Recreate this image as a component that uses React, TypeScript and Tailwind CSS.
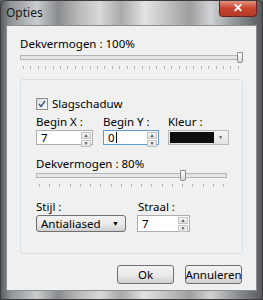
import React from 'react'

const font = { fontFamily: '"Noto Sans", "Open Sans", sans-serif' }

function Ticks({ count }: { count: number }) {
	return (
		<div className="flex justify-between px-[3px]">
			{Array.from({ length: count }).map((_, i) => (
				<div key={i} className="h-[3px] w-px bg-[#b4b4b4]" />
			))}
		</div>
	)
}

function Slider({ pos, ticks }: { pos: string; ticks: number }) {
	return (
		<div className="flex flex-col gap-[3px]">
			<div className="relative h-[11px]">
				<div className="absolute inset-x-0 top-[3px] h-[5px] border border-[#b4b4b4] bg-[#e6e6e6]" />
				<div
					className="absolute top-0 h-[11px] w-[6px] rounded-b-[2px] border border-[#8c8c8c] bg-gradient-to-b from-[#fdfdfd] to-[#d8d8d8]"
					style={{ left: pos }}
				/>
			</div>
			<Ticks count={ticks} />
		</div>
	)
}

function Spin() {
	return (
		<div className="flex w-[10px] flex-col gap-px self-stretch py-px">
			<div className="flex flex-1 items-center justify-center border border-[#c3c3c3] bg-gradient-to-b from-[#f7f7f7] to-[#e0e0e0] text-[5px] leading-none text-[#555]">▲</div>
			<div className="flex flex-1 items-center justify-center border border-[#c3c3c3] bg-gradient-to-b from-[#f7f7f7] to-[#e0e0e0] text-[5px] leading-none text-[#555]">▼</div>
		</div>
	)
}

function NumInput({ value, w, h, focus, caret }: { value: string; w: string; h: string; focus?: boolean; caret?: boolean }) {
	return (
		<div className={`flex items-stretch border bg-white pl-[4px] pr-px ${w} ${h} ${focus ? 'border-[#5d9cd8]' : 'border-[#abadb3]'}`}>
			<span className="flex flex-1 items-center text-[11.5px] leading-none text-black">
				{value}
				{caret && <span className="ml-px inline-block h-[11px] w-px bg-black" />}
			</span>
			<Spin />
		</div>
	)
}

export default function App() {
	return (
		<div
			className="relative h-[300px] w-[263px] overflow-hidden bg-[linear-gradient(90deg,#55585a_0%,#8f9497_4%,#c9cccd_14%,#8a8d8f_22%,#b7b9ba_30%,#d8d9d9_38%,#a7a9aa_46%,#e2e3e3_55%,#bdbfc0_64%,#9c9ea0_72%,#cfd1d2_80%,#8f9294_90%,#55585a_100%)] text-[11.5px] text-black"
			style={font}
		>
			<div className="absolute inset-0 rounded-t-[6px] border border-[#3a3c3e]" />
			{/* title bar */}
			<div className="flex h-[25px] items-start justify-between pl-[6px]">
				<span className="mt-[5px] text-[12px] leading-[15px] text-[#1b1b1b]">Opties</span>
				<div className="mr-[6px] flex h-[17px] w-[38px] items-center justify-center rounded-b-[4px] border border-t-0 border-[#6b2318] bg-gradient-to-b from-[#e79a8a] via-[#c9452e] to-[#b33a26] text-[12px] font-bold leading-none text-white">
					✕
				</div>
			</div>

			{/* client area */}
			<div className="mx-[6px] flex h-[266px] flex-col border border-[#8a8d8f] bg-[#f0f0f0] px-[13px] pt-[10px]">
				<span className="leading-[15px]">Dekvermogen : 100%</span>
				<div className="mt-[1px] pr-px">
					<Slider pos="217px" ticks={30} />
				</div>

				<div className="mt-[10px] flex h-[175px] flex-col rounded-[3px] border border-[#d5dfe5] px-[15px] pt-[16px]">
					<div className="flex items-center gap-[4px]">
						<div className="flex h-[12px] w-[12px] items-center justify-center border border-[#8e8f8f] bg-gradient-to-br from-[#dcdcdc] to-white">
							<svg width="8" height="8" viewBox="0 0 8 8">
								<path d="M1 4 L3 6.5 L7 1" fill="none" stroke="#3c5a8e" strokeWidth="1.5" />
							</svg>
						</div>
						<span className="leading-[15px]">Slagschaduw</span>
					</div>

					<div className="mt-[3px] flex gap-[9px]">
						<div className="flex flex-col gap-[1px]">
							<span className="leading-[15px]">Begin X :</span>
							<NumInput value="7" w="w-[57px]" h="h-[15px]" />
						</div>
						<div className="ml-[1px] flex flex-col gap-[1px]">
							<span className="leading-[15px]">Begin Y :</span>
							<NumInput value="0" w="w-[56px]" h="h-[15px]" focus caret />
						</div>
						<div className="flex flex-col gap-[1px]">
							<span className="leading-[15px]">Kleur :</span>
							<div className="flex h-[15px] w-[61px] items-stretch border border-[#b9b9b9] bg-gradient-to-b from-[#f4f4f4] to-[#e2e2e2] p-px">
								<div className="flex-1 bg-[#0d0d0d]" />
								<div className="flex w-[13px] items-center justify-center text-[5px] text-[#555]">▼</div>
							</div>
						</div>
					</div>

					<span className="mt-[11px] leading-[15px]">Dekvermogen : 80%</span>
					<div className="mt-[-1px] w-[191px]">
						<Slider pos="144px" ticks={19} />
					</div>

					<div className="mt-[12px] flex gap-[11px]">
						<div className="flex flex-col gap-[1px]">
							<span className="leading-[15px]">Stijl :</span>
							<div className="flex h-[17px] w-[90px] items-center justify-between rounded-[3px] border border-[#707070] bg-gradient-to-b from-[#f2f2f2] via-[#ebebeb] to-[#cfcfcf] pl-[4px] pr-[6px]">
								<span className="leading-[15px]">Antialiased</span>
								<span className="text-[7px] leading-none">▼</span>
							</div>
						</div>
						<div className="flex flex-col gap-[1px]">
							<span className="pl-px leading-[15px]">Straal :</span>
							<NumInput value="7" w="w-[53px]" h="h-[17px]" />
						</div>
					</div>
				</div>

				<div className="mt-[11px] flex justify-end gap-[11px] pr-[1px]">
					<div className="flex h-[19px] w-[57px] items-center justify-center rounded-[3px] border border-[#707070] bg-gradient-to-b from-[#f2f2f2] via-[#ebebeb] to-[#cfcfcf] leading-none">
						Ok
					</div>
					<div className="flex h-[19px] w-[57px] items-center justify-center rounded-[3px] border border-[#707070] bg-gradient-to-b from-[#f2f2f2] via-[#ebebeb] to-[#cfcfcf] leading-none">
						Annuleren
					</div>
				</div>
			</div>
		</div>
	)
}
